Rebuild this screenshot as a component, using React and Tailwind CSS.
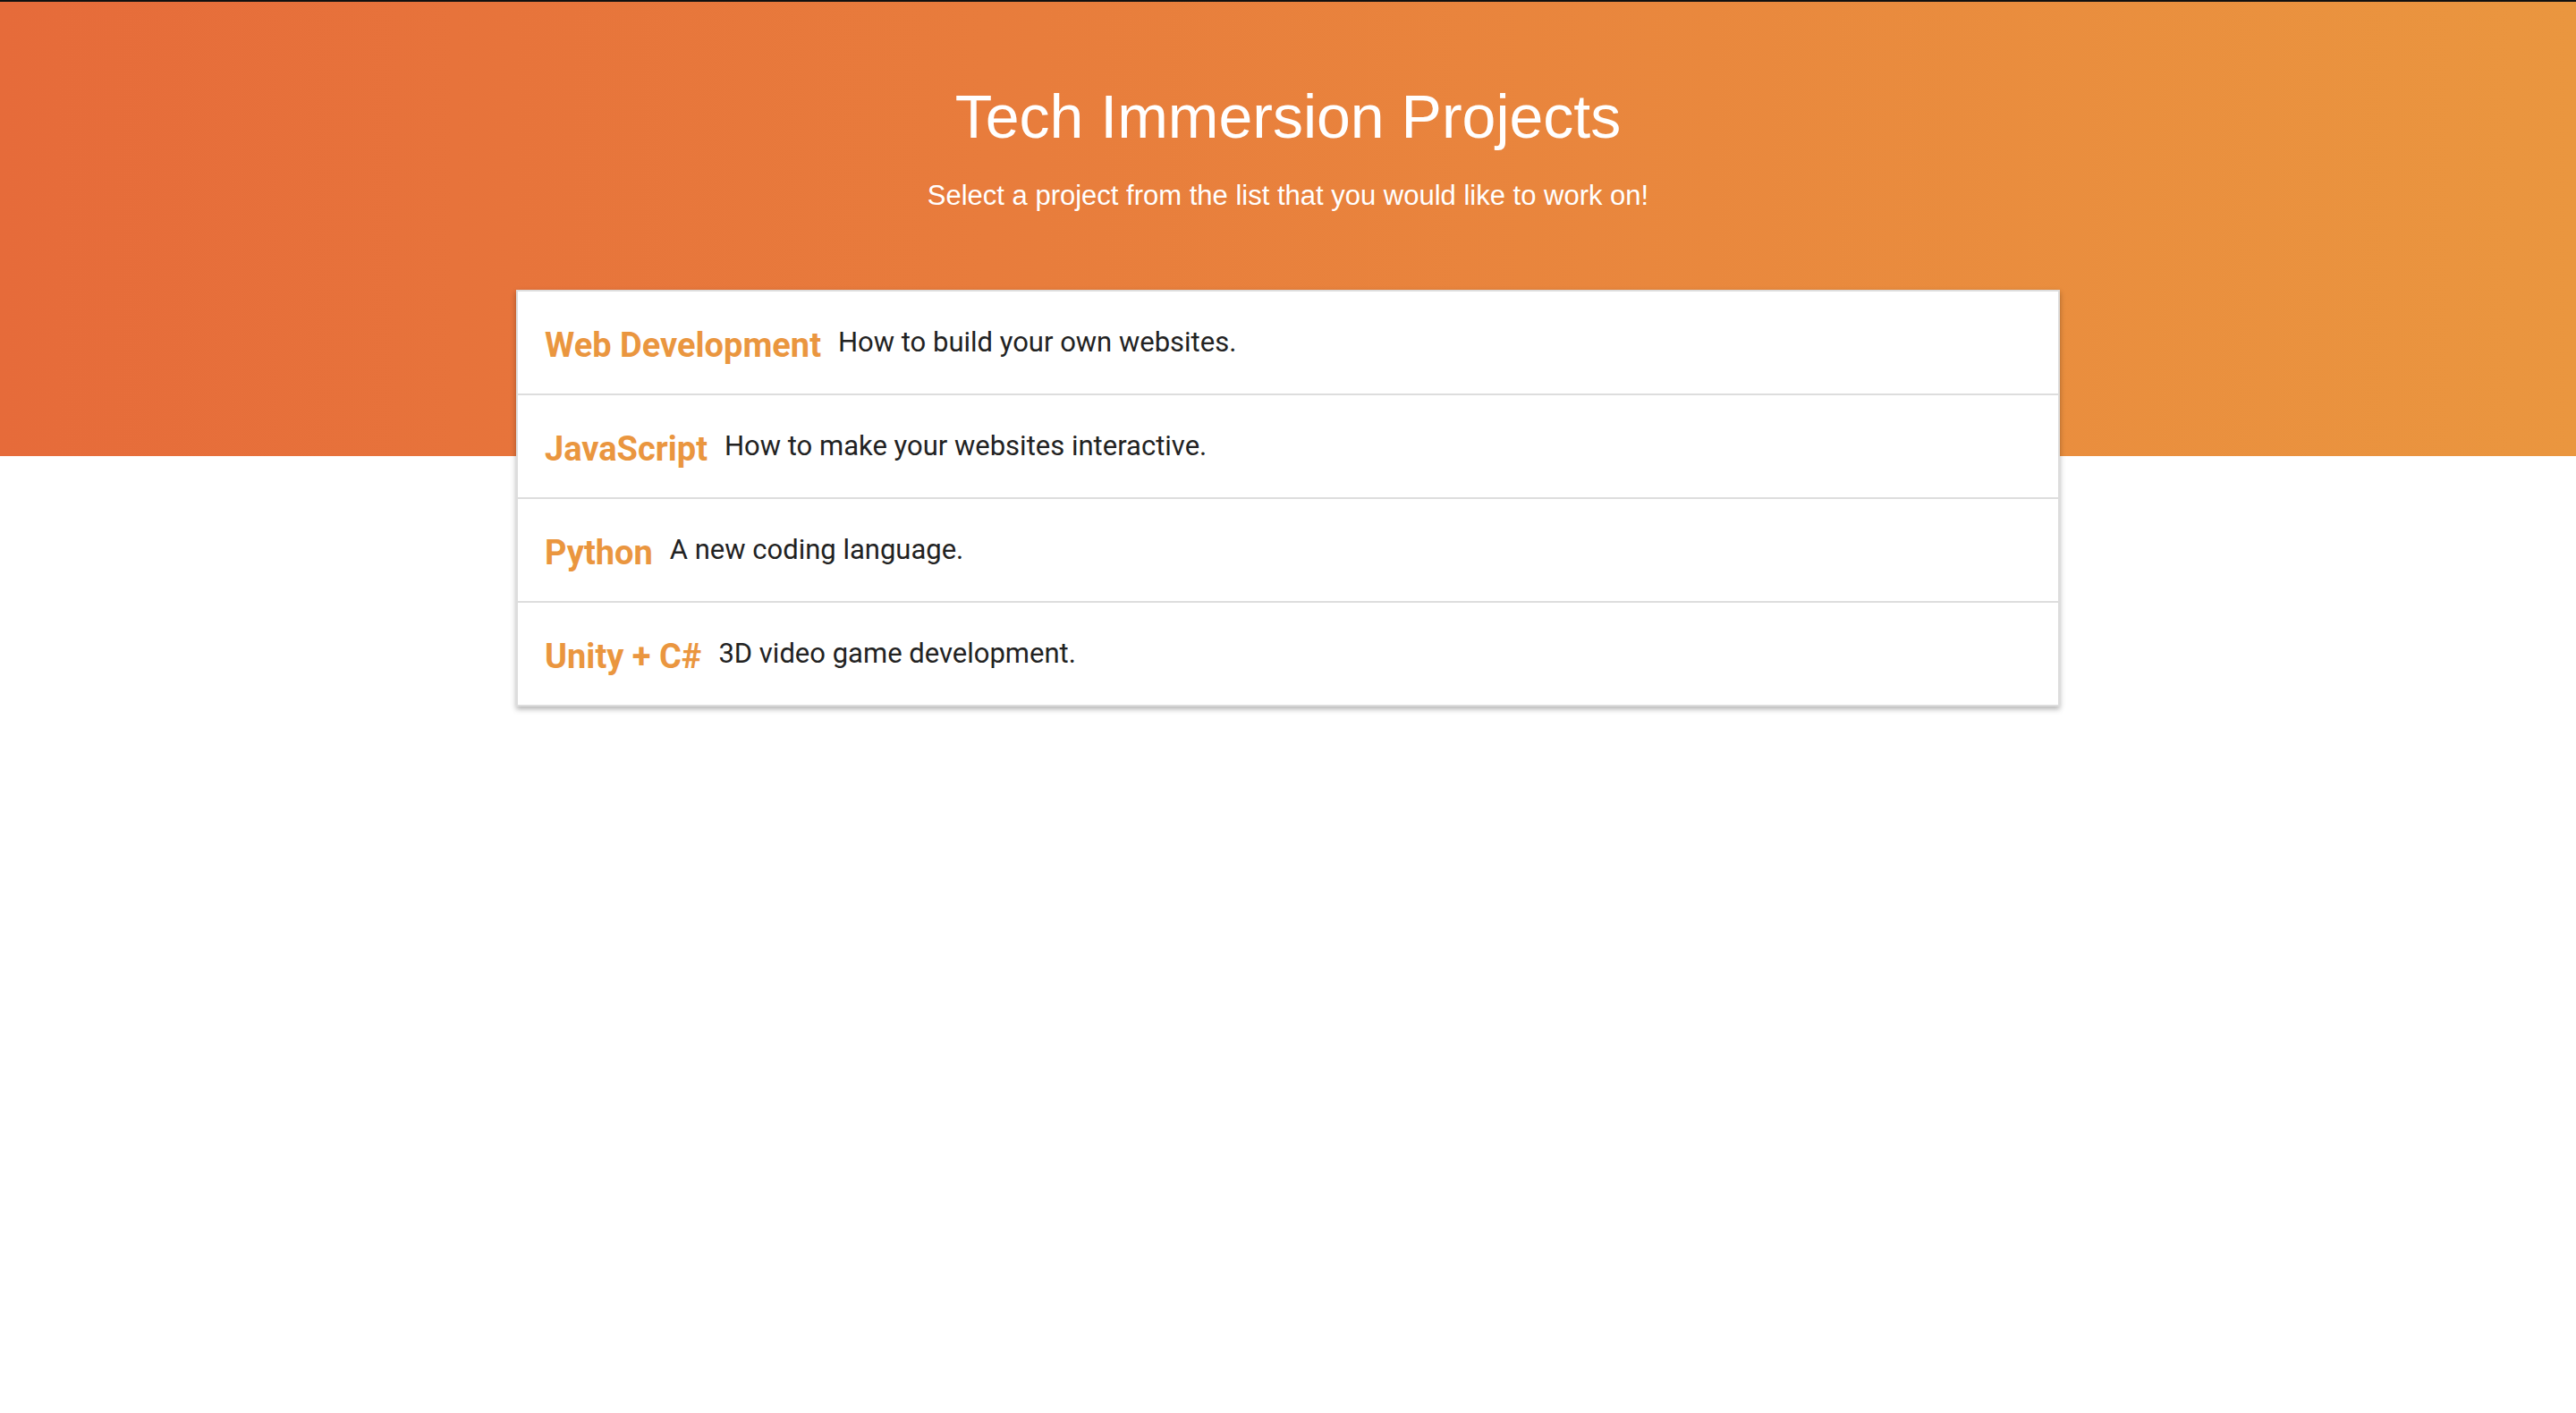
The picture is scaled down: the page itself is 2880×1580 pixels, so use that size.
import React from 'react'

const projects = [
  { name: 'Web Development', blurb: 'How to build your own websites.' },
  { name: 'JavaScript', blurb: 'How to make your websites interactive.' },
  { name: 'Python', blurb: 'A new coding language.' },
  { name: 'Unity + C#', blurb: '3D video game development.' },
]

function App() {
  return (
    <div className="min-h-[1580px] bg-white font-['Liberation_Sans',Arial,sans-serif]">
      <div className="h-[2px] bg-[#111]" />
      <header className="h-[508px] bg-linear-to-r from-[#e66b3a] to-[#ea963f] text-white text-center pt-[88px]">
        <h1 className="text-[68px] leading-[80px] font-normal">Tech Immersion Projects</h1>
        <p className="mt-[30px] text-[31px] leading-[38px]">
          Select a project from the list that you would like to work on!
        </p>
      </header>

      <ul className="w-[1726px] mx-auto -mt-[186px] bg-white border-2 border-[#dddddd] shadow-[0_3px_6px_rgba(0,0,0,0.3)] font-['Roboto',Arial,sans-serif]">
        {projects.map((p, i) => (
          <li
            key={p.name}
            className={`flex items-center px-[30px] gap-[19px] ${i < projects.length - 1 ? 'h-[116px] border-b-2 border-[#dddddd]' : 'h-[114px]'}`}
          >
            <span className="mt-[6px] text-[38px] leading-[44px] font-bold text-[#ea963f]">{p.name}</span>
            <span className="text-[31px] leading-[36px] text-[#222]">{p.blurb}</span>
          </li>
        ))}
      </ul>
    </div>
  )
}

export default App
